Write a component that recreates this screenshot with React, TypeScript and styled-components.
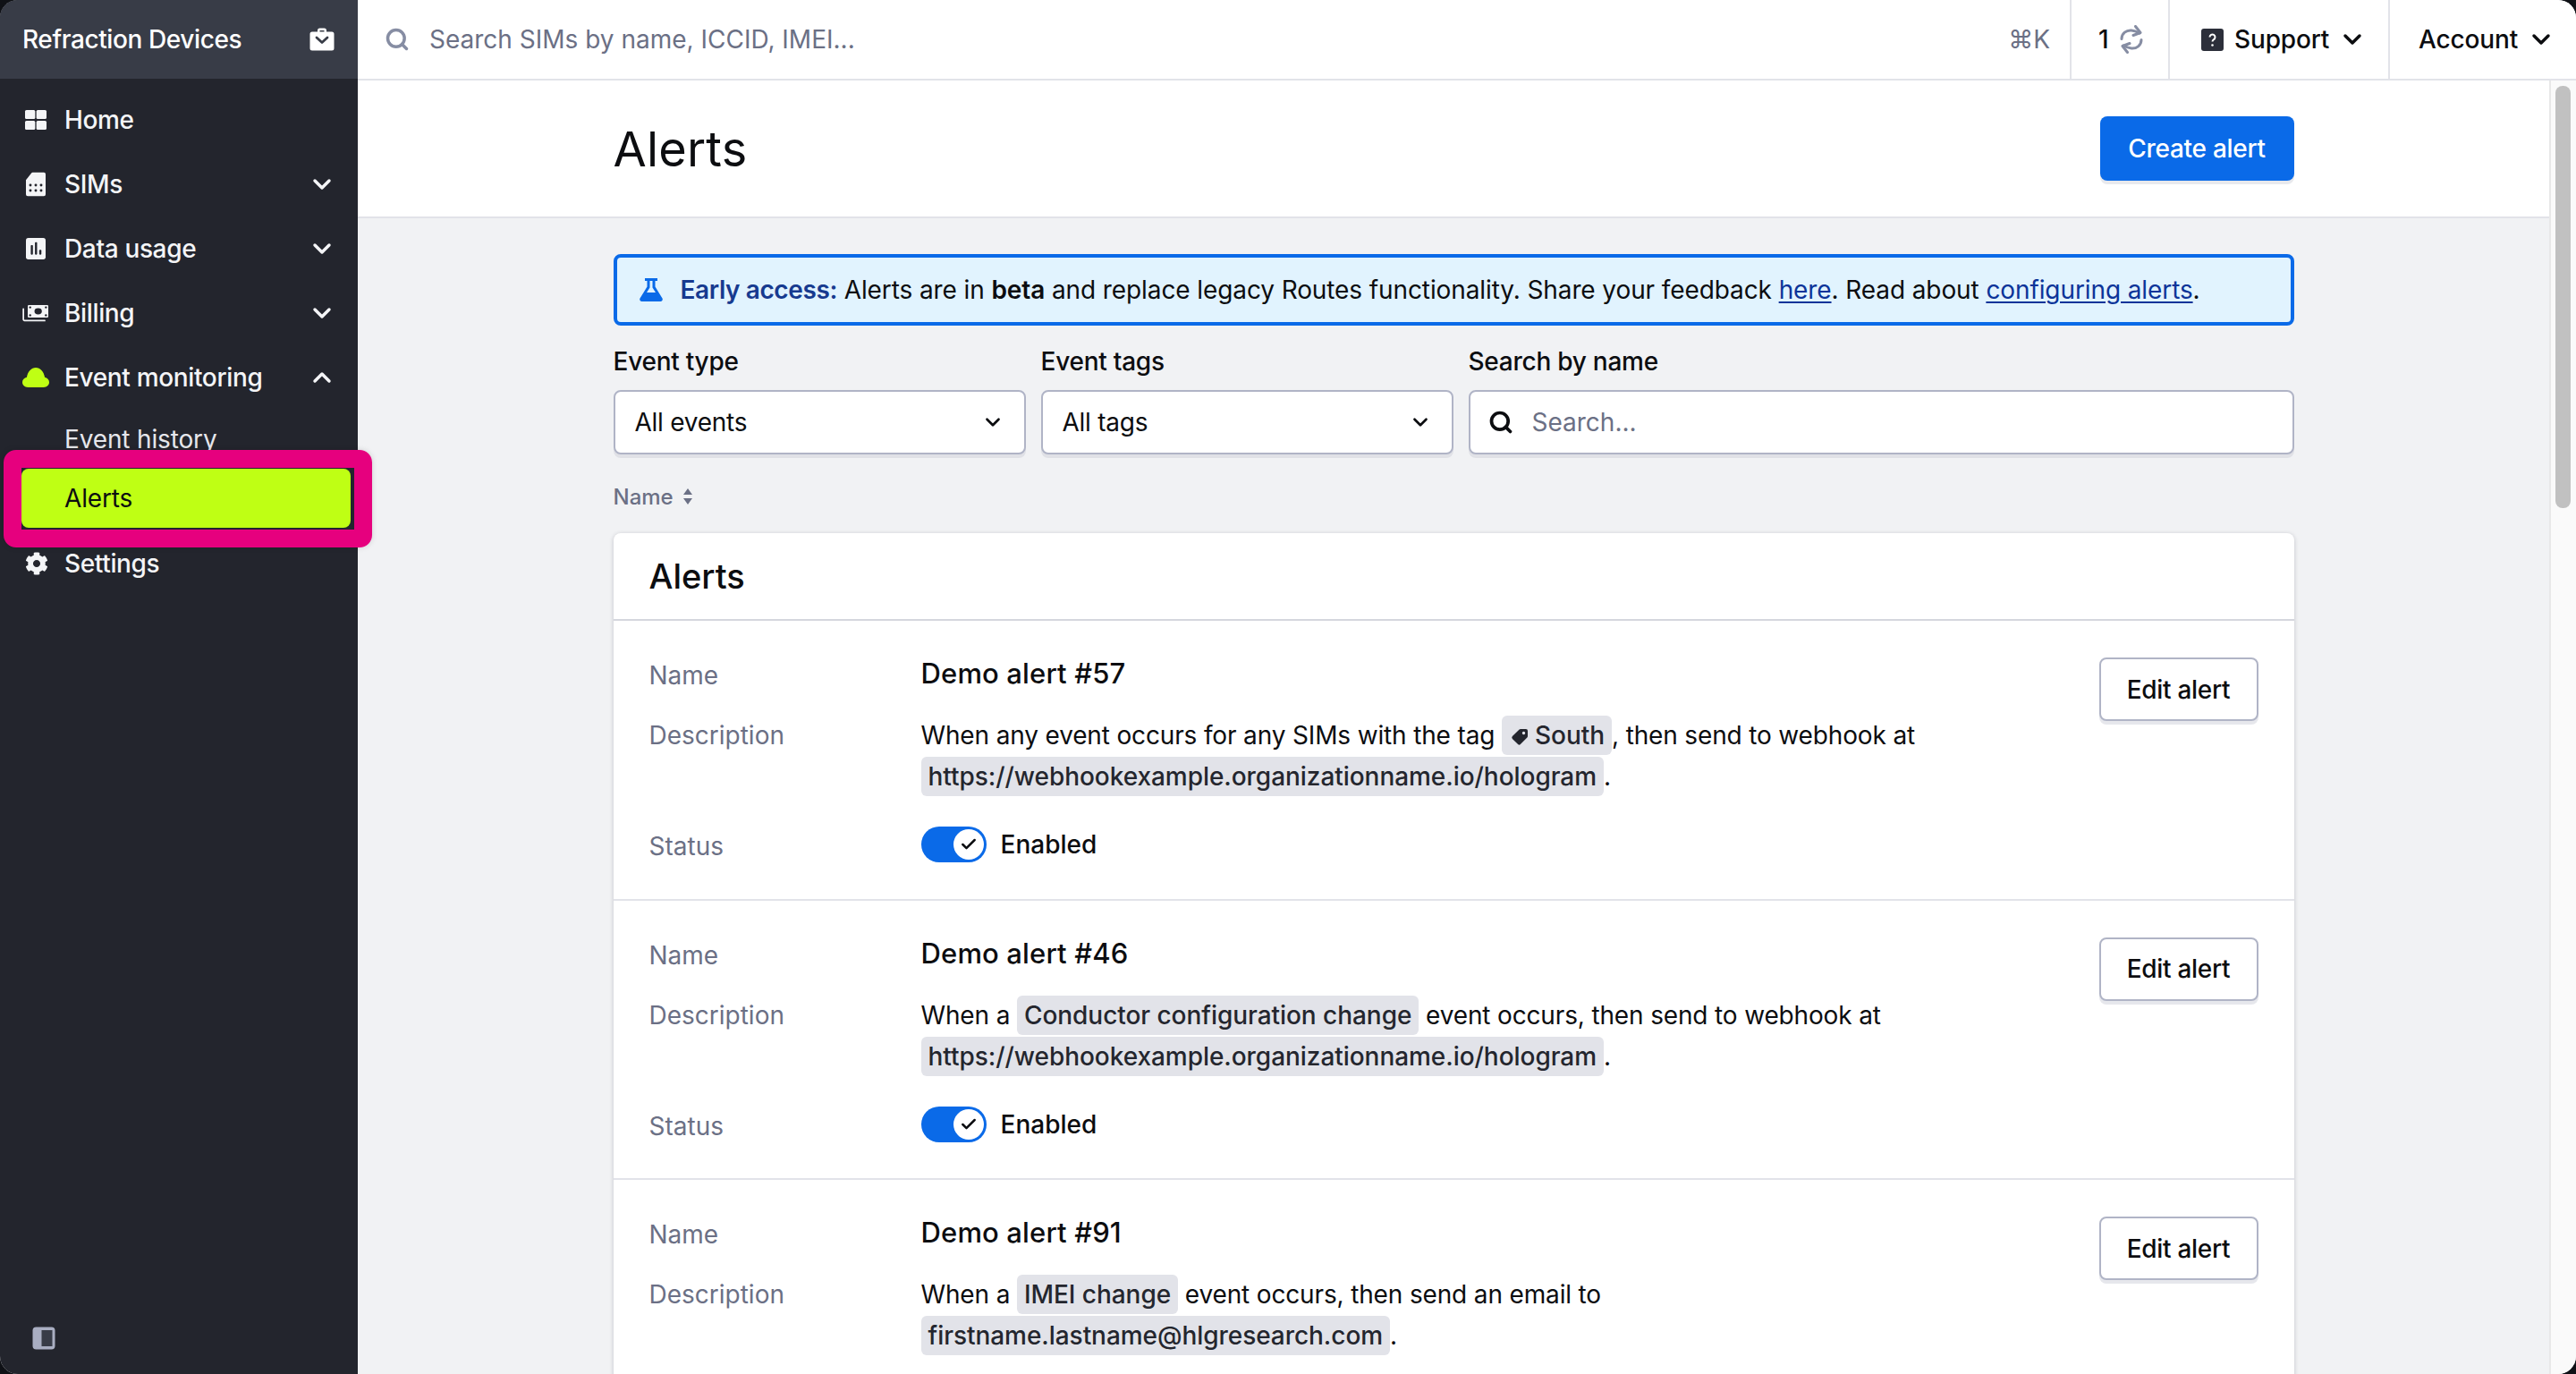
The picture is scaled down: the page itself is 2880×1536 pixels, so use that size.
import React from "react";
import styled, { createGlobalStyle } from "styled-components";
import { ChevronDown, ChevronUp, Search as SearchIcon, Check } from "lucide-react";
import { FaCog } from "react-icons/fa";

const Global = createGlobalStyle`
  html, body { margin: 0; padding: 0; background: #0f1116; }
  * { box-sizing: border-box; }
  body { font-family: Inter, "Liberation Sans", sans-serif; font-size: 28px; color: #0c0d10; }
`;

const Shell = styled.div`
  position: relative;
  display: flex;
  width: 2880px;
  height: 1536px;
  border-radius: 20px;
  overflow: hidden;
  background: #f1f2f4;
`;

const Sidebar = styled.aside`
  width: 400px;
  flex: none;
  display: flex;
  flex-direction: column;
  background: #23252d;
  color: #fff;
`;

const OrgHeader = styled.div`
  height: 88px;
  flex: none;
  display: flex;
  align-items: center;
  justify-content: space-between;
  padding: 0 26px 0 25px;
  background: #383c47;
  font-weight: 500;
  letter-spacing: -0.4px;
`;

const Nav = styled.nav`
  flex: 1;
  display: flex;
  flex-direction: column;
  padding-top: 10px;
`;

const NavItem = styled.div`
  height: 72px;
  display: flex;
  align-items: center;
  padding: 0 24px 0 72px;
  position: relative;
  font-weight: 500;
  letter-spacing: -0.35px;
  color: #f4f5f7;
  svg.lead {
    position: absolute;
    left: 24px;
    top: 50%;
    transform: translateY(-50%);
  }
  svg.cog {
    left: 28px;
  }
  svg.chev {
    margin-left: auto;
  }
`;

const SubItem = styled.div<{ $active?: boolean }>`
  height: 66px;
  margin: ${(p) => (p.$active ? "0 8px 4px 24px" : "0")};
  padding-left: ${(p) => (p.$active ? "48px" : "72px")};
  display: flex;
  align-items: center;
  border-radius: 8px;
  letter-spacing: -0.15px;
  background: ${(p) => (p.$active ? "#bfff14" : "transparent")};
  color: ${(p) => (p.$active ? "#0c0d10" : "#e6e7ec")};
`;

const Collapse = styled.div`
  padding: 0 0 27px 36px;
  display: flex;
`;

const Highlight = styled.div`
  position: absolute;
  left: 4px;
  top: 503px;
  width: 412px;
  height: 109px;
  border: 20px solid #e6007e;
  border-radius: 14px;
  pointer-events: none;
  box-shadow: 0 0 6px rgba(0, 0, 0, 0.15);
`;

const Main = styled.div`
  flex: 1;
  min-width: 0;
  display: flex;
  flex-direction: column;
`;

const TopBar = styled.header`
  height: 90px;
  flex: none;
  display: flex;
  align-items: stretch;
  background: #fff;
  border-bottom: 2px solid #e2e3e9;
`;

const GlobalSearch = styled.div`
  flex: 1;
  display: flex;
  align-items: center;
  padding: 0 22px 0 30px;
  color: #6b7085;
  svg { color: #868da3; margin-right: 22px; }
`;

const Kbd = styled.span`
  margin-left: auto;
  color: #6b7085;
  font-size: 28px;
`;

const BarCell = styled.div<{ $pad: number; $w: number; $gap: number }>`
  width: ${(p) => p.$w}px;
  flex: none;
  display: flex;
  align-items: center;
  padding-left: ${(p) => p.$pad}px;
  border-left: 2px solid #e2e3e9;
  font-weight: 500;
  letter-spacing: -0.15px;
  gap: ${(p) => p.$gap}px;
`;

const TightChevron = styled(ChevronDown)`
  margin-left: -2px;
`;

const Body = styled.div`
  flex: 1;
  min-height: 0;
  display: flex;
`;

const Scroll = styled.div`
  flex: 1;
  min-width: 0;
  overflow: hidden;
`;

const ScrollTrack = styled.div`
  width: 30px;
  flex: none;
  background: #fafafa;
  border-left: 2px solid #e8e8e8;
  padding: 6px 6px 0 5px;
`;

const ScrollThumb = styled.div`
  height: 472px;
  background: #c1c1c1;
  border-radius: 8px;
`;

const PageHeader = styled.div`
  height: 154px;
  background: #fff;
  border-bottom: 2px solid #e2e3e9;
`;

const Wrap = styled.div`
  width: 1879px;
  margin: 0 auto;
`;

const PageHeaderInner = styled(Wrap)`
  height: 100%;
  display: flex;
  align-items: center;
  justify-content: space-between;
`;

const Title = styled.h1`
  margin: 0;
  font-size: 54px;
  font-weight: 400;
  letter-spacing: 0.2px;
`;

const Primary = styled.button`
  width: 217px;
  height: 72px;
  border: 0;
  border-radius: 8px;
  background: #0a6ae8;
  color: #fff;
  font: 500 28px Inter, sans-serif;
  letter-spacing: -0.3px;
  box-shadow: 0 4px 0 #e8e9ed;
`;

const Banner = styled.div`
  height: 80px;
  margin-top: 40px;
  display: flex;
  align-items: center;
  padding-left: 25px;
  border: 4px solid #0a6ae8;
  border-radius: 8px;
  background: #e1f3fe;
  gap: 20px;
  white-space: pre;
  letter-spacing: -0.1px;
`;

const BannerLead = styled.b`
  font-weight: 600;
  color: #173a8f;
  letter-spacing: -0.4px;
`;

const Strong = styled.b`
  font-weight: 600;
`;

const BannerLink = styled.a`
  color: #0c3499;
  text-decoration: underline;
  text-decoration-thickness: 2px;
  text-underline-offset: 3px;
`;

const Filters = styled.div`
  margin-top: 20px;
  display: grid;
  grid-template-columns: 461px 461px 1fr;
  column-gap: 17px;
`;

const Field = styled.div`
  display: flex;
  flex-direction: column;
  gap: 12px;
`;

const FieldLabel = styled.label`
  line-height: 40px;
  font-weight: 500;
  letter-spacing: -0.25px;
`;

const Control = styled.div`
  height: 72px;
  display: flex;
  align-items: center;
  justify-content: space-between;
  padding: 0 22px;
  background: #fff;
  border: 2px solid #b0b4c6;
  border-radius: 8px;
  box-shadow: 0 4px 0 #e0e1e6;
  letter-spacing: -0.25px;
`;

const SearchControl = styled(Control)`
  justify-content: flex-start;
  color: #6b7085;
  gap: 21px;
  letter-spacing: 0;
  padding-left: 20px;
  svg { color: #0c0d10; }
`;

const SortRow = styled.div`
  margin-top: 31px;
  height: 32px;
  display: flex;
  align-items: center;
  gap: 10px;
  font-size: 24px;
  font-weight: 500;
  color: #6b7085;
`;

const Card = styled.section`
  margin-top: 25px;
  background: #fff;
  border-radius: 8px 8px 0 0;
  box-shadow: 0 1px 5px rgba(30, 34, 50, 0.22);
`;

const CardHeader = styled.div`
  height: 98px;
  display: flex;
  align-items: center;
  padding-left: 40px;
  border-bottom: 2px solid #d5d7de;
  font-size: 38px;
  font-weight: 500;
`;

const Row = styled.article`
  height: 312.5px;
  display: flex;
  justify-content: space-between;
  align-items: flex-start;
  padding: 41px 40px 0;
  border-bottom: 2px solid #e2e3e9;
`;

const Fields = styled.div`
  display: flex;
  flex-direction: column;
`;

const Item = styled.div<{ $mt: number }>`
  display: grid;
  grid-template-columns: 304px 1fr;
  margin-top: ${(p) => p.$mt}px;
  align-items: start;
`;

const Key = styled.div<{ $lh: number }>`
  line-height: ${(p) => p.$lh}px;
  color: #6b7085;
`;

const Name = styled.div`
  line-height: 36px;
  font-size: 31px;
  font-weight: 500;
  letter-spacing: 0.15px;
`;

const Desc = styled.div`
  width: 1270px;
  line-height: 46px;
  letter-spacing: -0.15px;
`;

const Tag = styled.span`
  display: inline-block;
  height: 44px;
  line-height: 44px;
  padding: 0 8px;
  background: #e2e3e9;
  border-radius: 6px;
  white-space: nowrap;
  color: #24262e;
  font-weight: 450;
  letter-spacing: -0.05px;
  svg { margin: 0 7px 0 2px; vertical-align: -2px; }
`;

const Status = styled.div`
  display: flex;
  align-items: center;
  gap: 16px;
  font-weight: 500;
  height: 40px;
`;

const Toggle = styled.div`
  width: 73px;
  height: 40px;
  display: flex;
  align-items: center;
  justify-content: flex-end;
  padding-right: 3px;
  border-radius: 20px;
  background: #0a6ae8;
`;

const Knob = styled.div`
  width: 34px;
  height: 34px;
  display: flex;
  align-items: center;
  justify-content: center;
  border-radius: 50%;
  background: #fff;
  color: #0c0d10;
`;

const Secondary = styled.button`
  width: 178px;
  height: 71px;
  flex: none;
  border: 2px solid #b0b4c6;
  border-radius: 8px;
  background: #fff;
  color: #0c0d10;
  font: 500 28px Inter, sans-serif;
  letter-spacing: -0.3px;
  box-shadow: 0 4px 0 #e6e7ec;
`;

const Lead = ({ children }: { children: React.ReactNode }) => (
  <svg className="lead" width={32} height={32} viewBox="0 0 24 24" fill="currentColor">
    {children}
  </svg>
);

const Chev = ({ up }: { up?: boolean }) =>
  up ? <ChevronUp className="chev" size={32} strokeWidth={2.6} /> : <ChevronDown className="chev" size={32} strokeWidth={2.6} />;

const TagGlyph = () => (
  <svg width="20" height="20" viewBox="0 0 20 20" fill="#24262e">
    <path
      d="M11 1h6a2 2 0 0 1 2 2v6a2 2 0 0 1-.6 1.400l-7.500 7.700a2 2 0 0 1-2.800 0l-6.200-6.200a2 2 0 0 1 0-2.800L9.600 1.600A2 2 0 0 1 11 1zm3.500 6.200a1.700 1.700 0 1 0 0-3.400 1.700 1.700 0 0 0 0 3.400z"
      fillRule="evenodd"
    />
  </svg>
);

const SyncGlyph = () => (
  <svg width="26" height="32" viewBox="0 0 26 32" fill="none" stroke="#868da3" strokeWidth="3" strokeLinecap="round" strokeLinejoin="round">
    <path d="M2 15.500C2 9 7.500 5.500 13 6c3.500.3 6 1.500 9 3" />
    <path d="M17.500 1.500 23 8.500l-8 3" />
    <path d="M24 16.500C24 23 18.500 26.500 13 26c-3.500-.3-6-1.500-9-3" />
    <path d="M8.500 30.500 3 23.500l8-3" />
  </svg>
);

const alerts = [
  {
    name: "Demo alert #57",
    desc: (
      <>
        When any event occurs for any SIMs with the tag{" "}
        <Tag>
          <TagGlyph />
          South
        </Tag>
        , then send to webhook at <Tag>https://webhookexample.organizationname.io/hologram</Tag>.
      </>
    ),
  },
  {
    name: "Demo alert #46",
    desc: (
      <>
        When a <Tag>Conductor configuration change</Tag> event occurs, then send to webhook at{" "}
        <Tag>https://webhookexample.organizationname.io/hologram</Tag>.
      </>
    ),
  },
  {
    name: "Demo alert #91",
    desc: (
      <>
        When a <Tag>IMEI change</Tag> event occurs, then send an email to <Tag>firstname.lastname@hlgresearch.com</Tag>.
      </>
    ),
  },
];

export default function App() {
  return (
    <>
      <Global />
      <Shell>
        <Sidebar>
          <OrgHeader>
            Refraction Devices
            <svg width="28" height="28" viewBox="0 0 28 28" fill="#fff">
              <path d="M9 5.500V4a2.500 2.500 0 0 1 2.500-2.500h5A2.500 2.500 0 0 1 19 4v1.500h6a2.500 2.500 0 0 1 2.500 2.500v16a2.500 2.500 0 0 1-2.500 2.500H3A2.500 2.500 0 0 1 .5 24V8A2.500 2.500 0 0 1 3 5.500h6zm2.500 0h5V4h-5v1.500z" fillRule="evenodd" />
              <path d="M8 12l6 5.500 6-5.500" fill="none" stroke="#383c47" strokeWidth="2.800" strokeLinecap="round" strokeLinejoin="round" />
            </svg>
          </OrgHeader>
          <Nav>
            <NavItem>
              <Lead>
                <rect x="3" y="3.750" width="8.500" height="7.500" rx="1.200" />
                <rect x="12.500" y="3.750" width="8.500" height="7.500" rx="1.200" />
                <rect x="3" y="12.750" width="8.500" height="7.500" rx="1.200" />
                <rect x="12.500" y="12.750" width="8.500" height="7.500" rx="1.200" />
              </Lead>
              Home
            </NavItem>
            <NavItem>
              <Lead>
                <path d="M3.750 8.500 8.500 2.500a1 1 0 0 1 .8-.4h9.450a1.500 1.500 0 0 1 1.500 1.500v16.800a1.500 1.500 0 0 1-1.500 1.500H5.250a1.500 1.500 0 0 1-1.500-1.500z" />
                <g fill="#23252d">
                  <circle cx="7.500" cy="12.750" r="1.100" />
                  <circle cx="12" cy="12.750" r="1.100" />
                  <circle cx="16.500" cy="12.750" r="1.100" />
                  <circle cx="7.500" cy="17.250" r="1.100" />
                  <circle cx="12" cy="17.250" r="1.100" />
                  <circle cx="16.500" cy="17.250" r="1.100" />
                </g>
              </Lead>
              SIMs
              <Chev />
            </NavItem>
            <NavItem>
              <Lead>
                <rect x="3.750" y="3" width="16.500" height="18" rx="2" />
                <g fill="#23252d">
                  <rect x="7.800" y="9" width="1.800" height="8" rx=".6" />
                  <rect x="11.300" y="6.500" width="1.800" height="10.500" rx=".6" />
                  <rect x="14.900" y="13" width="1.800" height="4" rx=".6" />
                </g>
              </Lead>
              Data usage
              <Chev />
            </NavItem>
            <NavItem>
              <Lead>
                <rect x="5.250" y="5.250" width="17.250" height="10.500" rx="1" />
                <g fill="#23252d">
                  <ellipse cx="14" cy="10.500" rx="3.100" ry="2.600" />
                  <circle cx="7.300" cy="7.200" r=".9" />
                  <circle cx="20.500" cy="7.200" r=".9" />
                  <circle cx="7.300" cy="13.800" r=".9" />
                  <circle cx="20.500" cy="13.800" r=".9" />
                </g>
                <path d="M1.600 8.500v8.800a1 1 0 0 0 1 1H19.500" fill="none" stroke="currentColor" strokeWidth="1.300" strokeLinecap="round" />
              </Lead>
              Billing
              <Chev />
            </NavItem>
            <NavItem>
              <Lead>
                <path fill="#bfff14" d="M5.500 20.250C2.800 20.250.75 18.400.75 16c0-2.100 1.600-3.800 3.700-4.200C5.300 7 8.300 3.750 12 3.750s6.700 3.250 7.550 8.050c2.100.4 3.700 2.100 3.700 4.200 0 2.400-2.050 4.250-4.750 4.250z" />
              </Lead>
              Event monitoring
              <Chev up />
            </NavItem>
            <SubItem>Event history</SubItem>
            <SubItem $active>Alerts</SubItem>
            <NavItem>
              <FaCog className="lead cog" size={26} />
              Settings
            </NavItem>
          </Nav>
          <Collapse>
            <svg width="26" height="26" viewBox="0 0 26 26">
              <rect x="0.500" y="0.500" width="25" height="25" rx="4" fill="#a9aec2" />
              <rect x="10.500" y="4" width="12" height="18" fill="#383c47" />
            </svg>
          </Collapse>
        </Sidebar>
        <Highlight />
        <Main>
          <TopBar>
            <GlobalSearch>
              <SearchIcon size={28} strokeWidth={3} />
              Search SIMs by name, ICCID, IMEI...
              <Kbd>⌘K</Kbd>
            </GlobalSearch>
            <BarCell $w={110} $pad={30} $gap={13}>
              1
              <SyncGlyph />
            </BarCell>
            <BarCell $w={246} $pad={35} $gap={12}>
              <svg width="25" height="25" viewBox="0 0 25 25">
                <rect width="25" height="25" rx="3" fill="#2c2f3a" />
                <path d="M9.500 9.500a3 3 0 1 1 4.500 2.600c-1 .6-1.500 1.200-1.500 2.400" fill="none" stroke="#fff" strokeWidth="2" />
                <circle cx="12.500" cy="18.500" r="1.300" fill="#fff" />
              </svg>
              Support
              <TightChevron size={32} strokeWidth={2.6} />
            </BarCell>
            <BarCell $w={210} $pad={32} $gap={10}>
              Account
              <ChevronDown size={32} strokeWidth={2.6} />
            </BarCell>
          </TopBar>
          <Body>
            <Scroll>
              <PageHeader>
                <PageHeaderInner>
                  <Title>Alerts</Title>
                  <Primary>Create alert</Primary>
                </PageHeaderInner>
              </PageHeader>
              <Wrap>
                <Banner>
                  <svg width="26" height="26" viewBox="0 0 26 26" fill="#0a6ae8">
                    <path d="M6 0h14v3h-2.500v6.500l8 13c.8 1.500-.2 3.500-2 3.500H2.500c-1.800 0-2.800-2-2-3.500l8-13V3H6zm5.500 3v7.500L8 16h10l-3.500-5.500V3z" fillRule="evenodd" />
                  </svg>
                  <span>
                    <BannerLead>Early access:</BannerLead> Alerts are in <Strong>beta</Strong> and replace legacy Routes functionality. Share your feedback{" "}
                    <BannerLink>here</BannerLink>. Read about <BannerLink>configuring alerts</BannerLink>.
                  </span>
                </Banner>
                <Filters>
                  <Field>
                    <FieldLabel>Event type</FieldLabel>
                    <Control>
                      All events
                      <ChevronDown size={26} strokeWidth={2.5} />
                    </Control>
                  </Field>
                  <Field>
                    <FieldLabel>Event tags</FieldLabel>
                    <Control>
                      All tags
                      <ChevronDown size={26} strokeWidth={2.5} />
                    </Control>
                  </Field>
                  <Field>
                    <FieldLabel>Search by name</FieldLabel>
                    <SearchControl>
                      <SearchIcon size={28} strokeWidth={3.2} />
                      Search...
                    </SearchControl>
                  </Field>
                </Filters>
                <SortRow>
                  Name
                  <svg width="12" height="18" viewBox="0 0 12 18" fill="#6b7085">
                    <path d="M6 0l5 7H1zM6 18l-5-7h10z" />
                  </svg>
                </SortRow>
                <Card>
                  <CardHeader>Alerts</CardHeader>
                  {alerts.map((a) => (
                    <Row key={a.name}>
                      <Fields>
                        <Item $mt={0}>
                          <Key $lh={40}>Name</Key>
                          <Name>{a.name}</Name>
                        </Item>
                        <Item $mt={24}>
                          <Key $lh={46}>Description</Key>
                          <Desc>{a.desc}</Desc>
                        </Item>
                        <Item $mt={33}>
                          <Key $lh={44}>Status</Key>
                          <Status>
                            <Toggle>
                              <Knob>
                                <Check size={20} strokeWidth={3} />
                              </Knob>
                            </Toggle>
                            Enabled
                          </Status>
                        </Item>
                      </Fields>
                      <Secondary>Edit alert</Secondary>
                    </Row>
                  ))}
                </Card>
              </Wrap>
            </Scroll>
            <ScrollTrack>
              <ScrollThumb />
            </ScrollTrack>
          </Body>
        </Main>
      </Shell>
    </>
  );
}
